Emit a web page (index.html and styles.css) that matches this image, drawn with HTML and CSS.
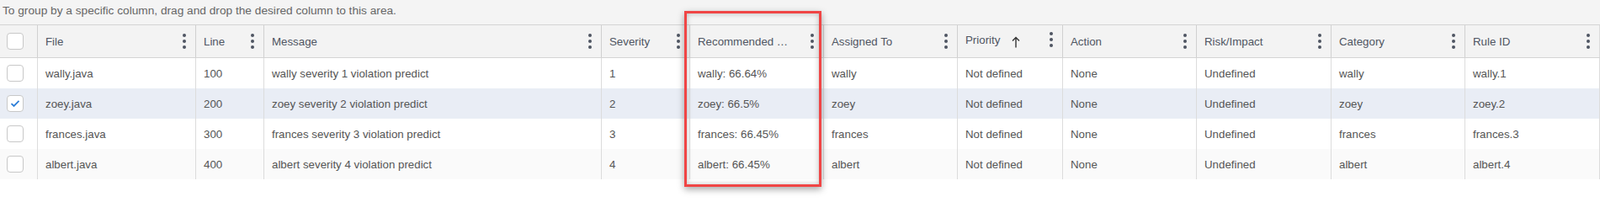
FILE: index.html
```html
<!DOCTYPE html>
<html>
<head>
<meta charset="utf-8">
<link rel="stylesheet" href="styles.css">
</head>
<body>
<div class="grid">
  <div class="group-panel">To group by a specific column, drag and drop the desired column to this area.</div>
  <div class="row head">
    <div class="cell chk"><span class="box"></span></div>
    <div class="cell"><span class="title">File</span><span class="kebab"><i></i><i></i><i></i></span></div>
    <div class="cell"><span class="title">Line</span><span class="kebab"><i></i><i></i><i></i></span></div>
    <div class="cell"><span class="title">Message</span><span class="kebab"><i></i><i></i><i></i></span></div>
    <div class="cell"><span class="title">Severity</span><span class="kebab"><i></i><i></i><i></i></span></div>
    <div class="cell"><span class="title">Recommended …</span><span class="kebab"><i></i><i></i><i></i></span></div>
    <div class="cell"><span class="title">Assigned To</span><span class="kebab"><i></i><i></i><i></i></span></div>
    <div class="cell sorted"><span class="title">Priority<svg class="arrow" width="10" height="14" viewBox="0 0 10 14"><path d="M5 1.5V13.5M1 5.5L5 1.5L9 5.5" fill="none" stroke="#333" stroke-width="1.4"/></svg></span><span class="kebab"><i></i><i></i><i></i></span></div>
    <div class="cell"><span class="title">Action</span><span class="kebab"><i></i><i></i><i></i></span></div>
    <div class="cell"><span class="title">Risk/Impact</span><span class="kebab"><i></i><i></i><i></i></span></div>
    <div class="cell"><span class="title">Category</span><span class="kebab"><i></i><i></i><i></i></span></div>
    <div class="cell"><span class="title">Rule ID</span><span class="kebab"><i></i><i></i><i></i></span></div>
  </div>
  <div class="row">
    <div class="cell chk"><span class="box"></span></div>
    <div class="cell">wally.java</div>
    <div class="cell">100</div>
    <div class="cell">wally severity 1 violation predict</div>
    <div class="cell">1</div>
    <div class="cell">wally: 66.64%</div>
    <div class="cell">wally</div>
    <div class="cell">Not defined</div>
    <div class="cell">None</div>
    <div class="cell">Undefined</div>
    <div class="cell">wally</div>
    <div class="cell">wally.1</div>
  </div>
  <div class="row selected">
    <div class="cell chk"><span class="box checked"><svg width="12" height="10" viewBox="0 0 12 10"><path d="M1.5 5.2L4.5 8L10.5 1.8" fill="none" stroke="#2d7ed8" stroke-width="1.8"/></svg></span></div>
    <div class="cell">zoey.java</div>
    <div class="cell">200</div>
    <div class="cell">zoey severity 2 violation predict</div>
    <div class="cell">2</div>
    <div class="cell">zoey: 66.5%</div>
    <div class="cell">zoey</div>
    <div class="cell">Not defined</div>
    <div class="cell">None</div>
    <div class="cell">Undefined</div>
    <div class="cell">zoey</div>
    <div class="cell">zoey.2</div>
  </div>
  <div class="row">
    <div class="cell chk"><span class="box"></span></div>
    <div class="cell">frances.java</div>
    <div class="cell">300</div>
    <div class="cell">frances severity 3 violation predict</div>
    <div class="cell">3</div>
    <div class="cell">frances: 66.45%</div>
    <div class="cell">frances</div>
    <div class="cell">Not defined</div>
    <div class="cell">None</div>
    <div class="cell">Undefined</div>
    <div class="cell">frances</div>
    <div class="cell">frances.3</div>
  </div>
  <div class="row alt">
    <div class="cell chk"><span class="box"></span></div>
    <div class="cell">albert.java</div>
    <div class="cell">400</div>
    <div class="cell">albert severity 4 violation predict</div>
    <div class="cell">4</div>
    <div class="cell">albert: 66.45%</div>
    <div class="cell">albert</div>
    <div class="cell">Not defined</div>
    <div class="cell">None</div>
    <div class="cell">Undefined</div>
    <div class="cell">albert</div>
    <div class="cell">albert.4</div>
  </div>
  <div class="highlight"></div>
</div>
</body>
</html>
```
FILE: styles.css
```css
html, body {
  margin: 0;
  padding: 0;
  background: #ffffff;
}
body {
  font-family: "Liberation Sans", Arial, sans-serif;
  font-size: 13.3px;
  color: #555;
  min-height: 236px;
}
.grid {
  position: relative;
  width: 1901px;
  padding-bottom: 22px;
}
.group-panel {
  height: 30px;
  box-sizing: border-box;
  padding: 5px 0 0 3px;
  line-height: 16px;
  font-size: 13.7px;
  color: #666;
  background: #f4f4f4;
  border-bottom: 1px solid #d4d4d4;
}
.row {
  display: grid;
  grid-template-columns: 44px 188px 81px 401px 105px 159px 159px 125px 159px 160px 159px 161px;
  height: 36px;
  background: #fff;
}
.row.head {
  height: 39px;
  background: #f3f3f3;
  border-bottom: 1px solid #d4d4d4;
  box-sizing: border-box;
}
.row.selected { background: #e9edf5; }
.row.alt { background: #fafafa; }
.cell {
  box-sizing: border-box;
  display: flex;
  align-items: center;
  padding: 0 0 0 9px;
  border-left: 1px solid #dcdcdc;
  white-space: nowrap;
  overflow: hidden;
}
.cell:last-child {
  border-right: 1px solid #dcdcdc;
}
.cell.chk {
  border-left: none;
  padding-left: 8px;
}
.head .cell {
  border-left-color: #d0d0d0;
  color: #4f5562;
  justify-content: space-between;
  padding-right: 11px;
}
.head .cell.chk { justify-content: flex-start; }
.title {
  display: flex;
  align-items: center;
}
.sorted .title, .sorted .kebab {
  margin-top: -4px;
}
.arrow {
  margin-left: 14px;
  margin-top: 6px;
}
.kebab {
  display: flex;
  flex-direction: column;
  gap: 3px;
}
.kebab i {
  display: block;
  width: 4px;
  height: 4px;
  border-radius: 50%;
  background: #4f5562;
}
.box {
  box-sizing: border-box;
  width: 20px;
  height: 20px;
  border: 1px solid #c8c8c8;
  border-radius: 4px;
  background: #fff;
  display: flex;
  align-items: center;
  justify-content: center;
}
.highlight {
  position: absolute;
  left: 813px;
  top: 13px;
  width: 163px;
  height: 209px;
  box-sizing: border-box;
  border: 3px solid #f04545;
  box-shadow: 0 3px 8px rgba(0,0,0,0.35), inset 0 0 6px rgba(0,0,0,0.25);
  pointer-events: none;
}
```
